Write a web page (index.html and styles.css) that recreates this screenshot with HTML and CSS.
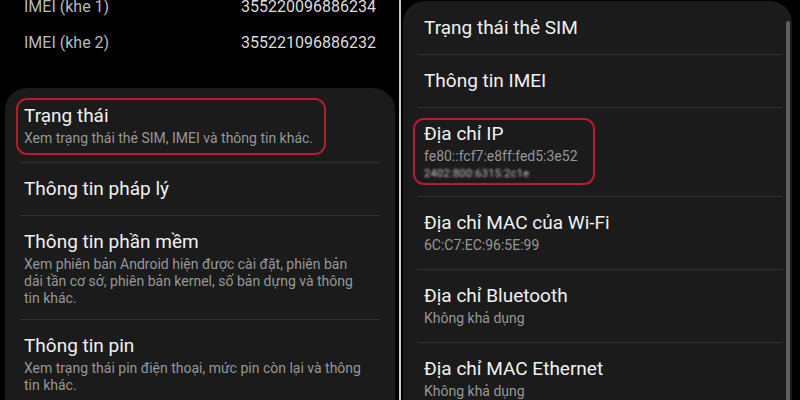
FILE: index.html
```html
<!DOCTYPE html>
<html lang="vi">
<head>
    <meta charset="UTF-8">
    <meta name="viewport" content="width=device-width, initial-scale=1.0">
    <title>Trạng thái</title>
    <link rel="stylesheet" href="styles.css">
</head>
<body>
    <div class="screen left">
        <div class="imei">
            <div class="imei-row"><span>IMEI (khe 1)</span><span class="num">355220096886234</span></div>
            <div class="imei-row"><span>IMEI (khe 2)</span><span class="num">355221096886232</span></div>
        </div>
        <div class="card">
            <div class="list">
                <div class="item marked">
                    <div class="mark mark-left">
                        <div class="title">Trạng thái</div>
                        <div class="sub">Xem trạng thái thẻ SIM, IMEI và thông tin khác.</div>
                    </div>
                </div>
                <div class="item single">
                    <div class="title">Thông tin pháp lý</div>
                </div>
                <div class="item">
                    <div class="title">Thông tin phần mềm</div>
                    <div class="sub">Xem phiên bản Android hiện được cài đặt, phiên bản dải tần cơ sở, phiên bản kernel, số bản dựng và thông tin khác.</div>
                </div>
                <div class="item">
                    <div class="title">Thông tin pin</div>
                    <div class="sub">Xem trạng thái pin điện thoại, mức pin còn lại và thông tin khác.</div>
                </div>
            </div>
        </div>
    </div>
    <div class="split"></div>
    <div class="screen right">
        <div class="card">
            <div class="list">
                <div class="item first">
                    <div class="title">Trạng thái thẻ SIM</div>
                </div>
                <div class="item">
                    <div class="title">Thông tin IMEI</div>
                </div>
                <div class="item">
                    <div class="mark mark-right">
                        <div class="title">Địa chỉ IP</div>
                        <div class="sub">fe80::fcf7:e8ff:fed5:3e52</div>
                        <div class="sub blur">2402:800:6315:2c1e</div>
                    </div>
                </div>
                <div class="item">
                    <div class="title">Địa chỉ MAC của Wi-Fi</div>
                    <div class="sub">6C:C7:EC:96:5E:99</div>
                </div>
                <div class="item">
                    <div class="title">Địa chỉ Bluetooth</div>
                    <div class="sub">Không khả dụng</div>
                </div>
                <div class="item">
                    <div class="title">Địa chỉ MAC Ethernet</div>
                    <div class="sub">Không khả dụng</div>
                </div>
            </div>
            <div class="scrollbar"></div>
        </div>
    </div>
</body>
</html>
```

FILE: styles.css
```css
body {
    margin: 0;
    width: 800px;
    height: 400px;
    overflow: hidden;
    display: flex;
    background: #000;
    font-family: Roboto, "Noto Sans", sans-serif;
}
.screen {
    height: 400px;
    overflow: hidden;
    display: flex;
    flex-direction: column;
}
.left {
    width: 399px;
}
.right {
    flex: 1;
}
.split {
    width: 2px;
    background: #c9c9c9;
}

/* IMEI lines above the card */
.imei {
    padding: 0 23px 0 24px;
}
.imei-row {
    display: flex;
    justify-content: space-between;
    line-height: 14px;
    padding-bottom: 22px;
    font-size: 16px;
    color: #b9b9b9;
}
.imei-row .num {
    color: #dcdcdc;
}

.card {
    flex: 1;
    display: flex;
    background: #1b1b1b;
    border-radius: 22px 22px 0 0;
}
.left .card {
    margin: 16px 4px 0 5px;
    padding-top: 2px;
}
.right .card {
    margin: 1px 8px 0 2px;
}
.list {
    flex: 1;
    min-width: 0;
}
.item + .item {
    border-top: 1px solid #323232;
}
.title {
    font-size: 19px;
    line-height: 24px;
    color: #f1f1f1;
}
.sub {
    font-size: 14px;
    line-height: 19px;
    color: #979797;
}

/* left screen rows */
.left .item {
    margin: 0 15px;
    padding: 14px 16px 12px 4px;
}
.left .item.marked {
    padding-bottom: 15px;
}
.left .item.single {
    padding-bottom: 14px;
}
.left .sub {
    line-height: 17px;
    margin-top: 2px;
}

/* right screen rows */
.right .item {
    margin: 0 0 0 15px;
    padding: 14px 6px 14px;
}
.right .item.first {
    padding-top: 15px;
}
.right .sub {
    margin-top: 1px;
}
.sub.blur {
    margin-top: 0;
    font-size: 11px;
    line-height: 16px;
    color: #c4c4c4;
    filter: blur(0.8px);
    letter-spacing: 0.3px;
}

/* red highlight drawn over the item */
.mark {
    position: relative;
    display: inline-block;
}
.mark::before {
    content: "";
    position: absolute;
    border: 2px solid #b71c2c;
    border-radius: 11px;
}
.mark-left::before {
    top: -6px;
    bottom: -8px;
    left: -8px;
    right: -13px;
}
.mark-right::before {
    top: -4px;
    bottom: -3px;
    left: -11px;
    right: -17px;
}

.scrollbar {
    width: 4px;
    margin: 20px 2px 0 4px;
    background: #5e5e5e;
    border-radius: 2px 2px 0 0;
}
```
